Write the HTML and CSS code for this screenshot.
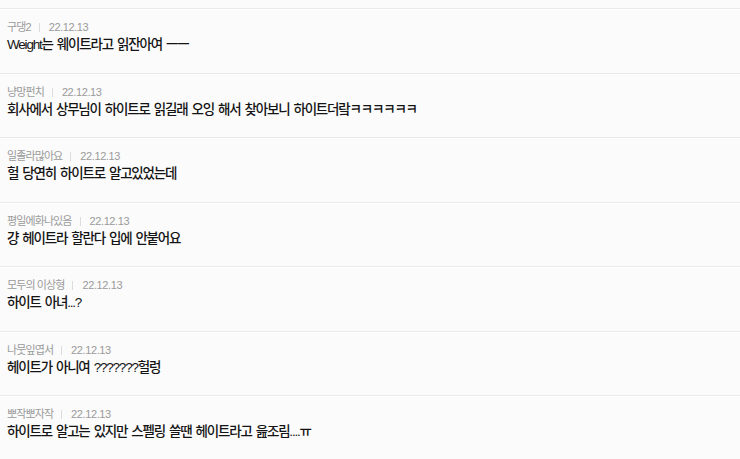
FILE: index.html
```html
<!DOCTYPE html>
<html lang="ko">
<head>
    <meta charset="UTF-8">
    <meta name="viewport" content="width=device-width, initial-scale=1.0">
    <title>댓글</title>
    <link rel="stylesheet" href="styles.css">
</head>
<body>
    <!-- Comment list -->
    <ul class="comments">
        <li class="comment">
            <div class="meta"><span class="nick">구댕2</span><span class="date">22.12.13</span></div>
            <p class="text">Weight는 웨이트라고 읽잔아여 ㅡㅡ</p>
        </li>
        <li class="comment">
            <div class="meta"><span class="nick">냥망펀치</span><span class="date">22.12.13</span></div>
            <p class="text">회사에서 상무님이 하이트로 읽길래 오잉 해서 찾아보니 하이트더랔ㅋㅋㅋㅋㅋㅋ</p>
        </li>
        <li class="comment">
            <div class="meta"><span class="nick">일졸라많아요</span><span class="date">22.12.13</span></div>
            <p class="text">헐 당연히 하이트로 알고있었는데</p>
        </li>
        <li class="comment">
            <div class="meta"><span class="nick">평일에화나있음</span><span class="date">22.12.13</span></div>
            <p class="text">걍 헤이트라 할란다 입에 안붙어요</p>
        </li>
        <li class="comment">
            <div class="meta"><span class="nick">모두의 이상형</span><span class="date">22.12.13</span></div>
            <p class="text">하이트 아녀...?</p>
        </li>
        <li class="comment">
            <div class="meta"><span class="nick">나뭇잎엽서</span><span class="date">22.12.13</span></div>
            <p class="text">헤이트가 아니여 ???????헐렁</p>
        </li>
        <li class="comment">
            <div class="meta"><span class="nick">뽀작뽀자작</span><span class="date">22.12.13</span></div>
            <p class="text">하이트로 알고는 있지만 스펠링 쓸땐 헤이트라고 읊조림....ㅠ</p>
        </li>
    </ul>
</body>
</html>
```

FILE: styles.css
```css
body {
    margin: 0;
    padding: 0;
    background-color: #fbfbfb;
    font-family: "Liberation Sans", "Noto Sans CJK KR", sans-serif;
    color: #111;
}
.comments {
    list-style: none;
    margin: 0;
    padding: 8px 0 0 0;
}
.comment {
    box-sizing: border-box;
    height: 64.5px;
    padding: 11px 0 0 7px;
    border-top: 1px solid #e9e9e9;
    box-shadow: inset 0 1px 0 #ffffff;
}
.meta {
    font-size: 11px;
    line-height: 14px;
    color: #9a9a9a;
}
.nick {
    letter-spacing: -0.9px;
}
.nick::after {
    content: "";
    display: inline-block;
    width: 1px;
    height: 9px;
    margin: 0 9px 0 8px;
    background-color: #dcdcdc;
    vertical-align: -1px;
}
.date {
    letter-spacing: -0.4px;
}
.text {
    margin: 1px 0 0 0;
    font-size: 13.5px;
    line-height: 20px;
    font-weight: 500;
    letter-spacing: -1.2px;
    word-spacing: 1.5px;
    color: #141414;
}
```
